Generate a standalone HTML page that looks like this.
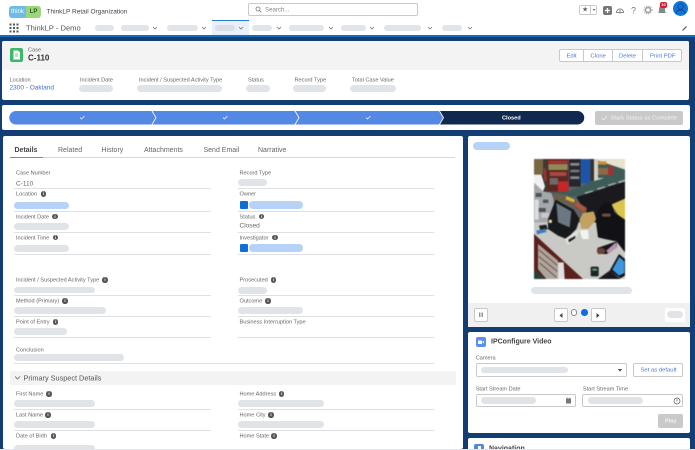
<!DOCTYPE html>
<html><head><meta charset="utf-8"><style>
html,body{margin:0;padding:0;width:695px;height:450px;overflow:hidden;background:#fff}
#r{position:relative;width:695px;height:450px;overflow:hidden;background:#123e73;font-family:"Liberation Sans",sans-serif;color:#555;filter:blur(.3px)}
#r div,#r svg{position:absolute}
.w{background:#fff;border-radius:2px}
.t{white-space:nowrap;line-height:8px;font-size:5.6px;color:#666;transform:translateY(.6px)}
.p{background:#e0e4e9;border-radius:4px}
.b{background:#b7d2f7;border-radius:4px}
.n{background:#e1e4e8;border-radius:3px;height:6px;top:25px}
.h{height:1px;background:#dde0e4}
.i{width:5.4px;height:5.4px;border-radius:50%;background:#555;color:#fff;font:bold 4.5px/5.4px "Liberation Sans",sans-serif;text-align:center}
.tab{white-space:nowrap;font-size:7px;line-height:10px;top:145.5px;color:#666}
.btn{border:1px solid #c9c9c9;border-radius:2px;background:#fff;box-sizing:border-box}
.av{width:8px;height:8px;background:#0f6fd6;border-radius:1px}
</style></head><body><div id="r">
<!-- header -->
<div style="left:0;top:0;width:695px;height:35px;background:#fff"></div>
<div style="left:0;top:35px;width:695px;height:1.5px;background:#0b6fc4"></div>
<div style="left:9px;top:6px;width:17px;height:11.5px;background:#6dbbea;border-radius:3px 0 0 3px;color:#fff;font-size:6px;line-height:13px;text-align:center">think</div>
<div style="left:26px;top:6px;width:15px;height:11.5px;background:#9ad67a;border-radius:0 3px 3px 0;color:#2d5a22;font-size:6px;font-weight:bold;line-height:13px;text-align:center">LP</div>
<div class="t" style="left:46.5px;top:8px;font-size:6.5px;color:#444">ThinkLP Retail Organization</div>
<div class="btn" style="left:248px;top:2.5px;width:170px;height:13.5px"></div>
<svg style="left:255px;top:6px" width="7" height="7" viewBox="0 0 7 7"><circle cx="3" cy="3" r="2" fill="none" stroke="#777" stroke-width=".8"/><path d="M4.5 4.5 6.3 6.3" stroke="#777" stroke-width=".8"/></svg>
<div class="t" style="left:265px;top:6px;color:#888;font-size:6.1px">Search...</div>
<svg style="left:9px;top:23px" width="10" height="10" viewBox="0 0 10 10" fill="#555"><rect x="0.5" y="0.5" width="2" height="2"/><rect x="4" y="0.5" width="2" height="2"/><rect x="7.5" y="0.5" width="2" height="2"/><rect x="0.5" y="4" width="2" height="2"/><rect x="4" y="4" width="2" height="2"/><rect x="7.5" y="4" width="2" height="2"/><rect x="0.5" y="7.5" width="2" height="2"/><rect x="4" y="7.5" width="2" height="2"/><rect x="7.5" y="7.5" width="2" height="2"/></svg>
<div class="t" style="left:26px;top:23.5px;font-size:7.6px;color:#555">ThinkLP - Demo</div>
<div style="left:212px;top:20px;width:37px;height:15px;background:#e9f0fa"></div>
<div style="left:212px;top:20px;width:37px;height:1px;background:#2f7ad1"></div>
<div class="n" style="left:95px;width:19px"></div>
<div class="n" style="left:121px;width:28px"></div>
<div class="n" style="left:167px;width:31px"></div>
<div class="n" style="left:215px;width:20px;background:#d9dfe7"></div>
<div class="n" style="left:252px;width:20px"></div>
<div class="n" style="left:289px;width:35px"></div>
<div class="n" style="left:341px;width:25px"></div>
<div class="n" style="left:384px;width:37px"></div>
<div class="n" style="left:442px;width:20px"></div>
<svg style="left:0;top:0" width="695" height="36" fill="none" stroke="#777" stroke-width=".8"><path d="M153 27l2 2 2-2M202 27l2 2 2-2M239 27l2 2 2-2M277 27l2 2 2-2M329 27l2 2 2-2M370 27l2 2 2-2M428 27l2 2 2-2M468 27l2 2 2-2"/><path d="M682.5 30.5l4-4" stroke="#555" stroke-width="1.2"/></svg>
<div class="btn" style="left:579px;top:5px;width:18px;height:10px"></div>
<div style="left:590px;top:5px;width:1px;height:10px;background:#c9c9c9"></div>
<div class="t" style="left:582px;top:6px;font-size:7px;color:#666">★</div>
<svg style="left:591px;top:8px" width="6" height="4"><path d="M1.5 1h3L3 3z" fill="#777"/></svg>
<div style="left:603px;top:5.5px;width:9px;height:9px;background:#777;border-radius:2px"></div>
<svg style="left:603px;top:5.5px" width="9" height="9"><path d="M4.5 2v5M2 4.5h5" stroke="#fff" stroke-width="1.3"/></svg>
<svg style="left:615px;top:5px" width="10" height="10" fill="none" stroke="#888" stroke-width="1"><path d="M1.5 7.5a3.5 3.5 0 0 1 7 0M1 7.5h8M5 5v3.5"/></svg>
<div class="t" style="left:631px;top:6px;font-size:9px;color:#777">?</div>
<svg style="left:643px;top:5px" width="10" height="10"><circle cx="5" cy="5" r="2.5" fill="none" stroke="#999" stroke-width="1.4"/><circle cx="5" cy="5" r="4" fill="none" stroke="#999" stroke-width=".9" stroke-dasharray="1.2 1.2"/></svg>
<svg style="left:656px;top:2px" width="13" height="13"><path d="M2 11c1-1 1-2 1-4s1-3 3-3 3 1 3 3 0 3 1 4z" fill="#888"/></svg>
<div style="left:660px;top:2px;width:7px;height:5.5px;background:#d21f2e;border-radius:2px;color:#fff;font:bold 4px/5.5px 'Liberation Sans',sans-serif;text-align:center">10</div>
<svg style="left:672.5px;top:.5px" width="15" height="15"><circle cx="7.5" cy="7.5" r="7.5" fill="#0f75dd"/><circle cx="7.5" cy="5.6" r="2.8" fill="none" stroke="#0b3f86" stroke-width=".8"/><path d="M3 12.5c.5-2.5 2.5-3.5 4.500-3.500s4 1 4.500 3.500" fill="none" stroke="#0b3f86" stroke-width=".8"/></svg>

<!-- case panel -->
<div class="w" style="left:1.5px;top:40.5px;width:687.5px;height:59px"></div>
<div style="left:1.5px;top:40.5px;width:687.5px;height:29px;background:#f3f3f3;border-radius:2px 2px 0 0"></div>
<div style="left:9.5px;top:47.5px;width:13.5px;height:14px;background:#3cba6a;border-radius:2px"></div>
<svg style="left:9.5px;top:47.5px" width="14" height="14"><path d="M3.5 2.5h4.500l2 2v7h-6.500z" fill="#fff"/><path d="M5 6h3M5 8h3" stroke="#3cba6a" stroke-width=".7"/></svg>
<div class="t" style="left:28px;top:46px">Case</div>
<div class="t" style="left:28px;top:53.5px;font-size:8px;font-weight:bold;color:#333">C-110</div>
<div class="btn" style="left:559px;top:48.5px;width:122.5px;height:13.5px"></div>
<div style="left:583px;top:48.5px;width:1px;height:13.5px;background:#c9c9c9"></div>
<div style="left:612px;top:48.5px;width:1px;height:13.5px;background:#c9c9c9"></div>
<div style="left:642px;top:48.5px;width:1px;height:13.5px;background:#c9c9c9"></div>
<div class="t" style="left:566.5px;top:51.5px;color:#4a78d6;font-size:5.9px">Edit</div>
<div class="t" style="left:590.5px;top:51.5px;color:#4a78d6;font-size:5.9px">Clone</div>
<div class="t" style="left:619px;top:51.5px;color:#4a78d6;font-size:5.9px">Delete</div>
<div class="t" style="left:650px;top:51.5px;color:#4a78d6;font-size:5.9px">Print PDF</div>
<div class="t" style="left:9.5px;top:76px">Location</div>
<div class="t" style="left:80px;top:76px">Incident Date</div>
<div class="t" style="left:139px;top:76px">Incident / Suspected Activity Type</div>
<div class="t" style="left:248px;top:76px">Status</div>
<div class="t" style="left:294.5px;top:76px">Record Type</div>
<div class="t" style="left:352px;top:76px">Total Case Value</div>
<div class="t" style="left:9.5px;top:84px;font-size:6.5px;color:#3f6fd0">2300 - Oakland</div>
<div class="p" style="left:79px;top:85px;width:34px;height:6.5px"></div>
<div class="p" style="left:136.5px;top:85px;width:85px;height:6.5px"></div>
<div class="p" style="left:246px;top:85px;width:24px;height:6.5px"></div>
<div class="p" style="left:292.5px;top:85px;width:33.5px;height:6.5px"></div>
<div class="p" style="left:350px;top:85px;width:45.5px;height:6.5px"></div>

<!-- path -->
<div class="w" style="left:1.5px;top:105px;width:688px;height:25px"></div>
<svg style="left:0;top:105px" width="695" height="25"><path d="M16 6H151.5l4 6.75-4 6.75H16a6.75 6.75 0 0 1 0-13.500z" fill="#5388e4"/><path d="M152.5 6H294.5l4 6.75-4 6.75H152.5l4-6.750z" fill="#5388e4"/><path d="M295.5 6H439l4 6.75-4 6.75H295.5l4-6.750z" fill="#5388e4"/><path d="M440 6H577.5a6.75 6.75 0 0 1 0 13.500H440l4-6.750z" fill="#12294f"/><path d="M80 12.5l1.500 1.500 3-3M223 12.5l1.500 1.500 3-3M366 12.5l1.500 1.500 3-3" fill="none" stroke="#fff" stroke-width=".7"/></svg>
<div class="t" style="left:502px;top:114px;color:#fff;font-weight:bold">Closed</div>
<div style="left:594.5px;top:111px;width:88.5px;height:13.5px;background:#c9c9c9;border-radius:2px"></div>
<div class="t" style="left:611px;top:114px;color:#f2f2f2;font-size:5.9px">Mark Status as Complete</div>
<svg style="left:600px;top:114px" width="8" height="8"><path d="M1.5 4l2 2 3.500-4" fill="none" stroke="#f2f2f2" stroke-width=".8"/></svg>

<!-- details -->
<div class="w" style="left:2.5px;top:135.5px;width:460px;height:313px"></div>
<div class="tab" style="left:14.5px;font-weight:bold;color:#444">Details</div>
<div class="tab" style="left:58px">Related</div>
<div class="tab" style="left:101.5px">History</div>
<div class="tab" style="left:144px">Attachments</div>
<div class="tab" style="left:203.5px">Send Email</div>
<div class="tab" style="left:258px">Narrative</div>
<div style="left:9.5px;top:157px;width:445.5px;height:1px;background:#d4d7dc"></div>
<div style="left:9.5px;top:156.5px;width:33px;height:1.5px;background:#5c8fe0"></div>

<div class="t" style="left:16px;top:169px">Case Number</div>
<div class="t" style="left:16px;top:179.5px;font-size:6.5px">C-110</div>
<div class="h" style="left:14px;top:188px;width:197px"></div>
<div class="t" style="left:16px;top:190px">Location</div><div class="i" style="left:40.8px;top:191.3px">i</div>
<div class="b" style="left:14px;top:202px;width:55px;height:7px"></div>
<div class="h" style="left:14px;top:210.5px;width:197px"></div>
<div class="t" style="left:16px;top:212.7px">Incident Date</div><div class="i" style="left:52.3px;top:214px">i</div>
<div class="p" style="left:14px;top:223px;width:55px;height:7px"></div>
<div class="h" style="left:14px;top:232px;width:197px"></div>
<div class="t" style="left:16px;top:233.5px">Incident Time</div><div class="i" style="left:52.8px;top:234.8px">i</div>
<div class="p" style="left:14px;top:244.5px;width:55px;height:7px"></div>
<div class="h" style="left:14px;top:253.5px;width:197px"></div>

<div class="t" style="left:239.5px;top:169px">Record Type</div>
<div class="p" style="left:238px;top:179px;width:28.7px;height:7px"></div>
<div class="h" style="left:238px;top:188px;width:196px"></div>
<div class="t" style="left:239.5px;top:190px">Owner</div>
<div class="av" style="left:239.5px;top:201px"></div>
<div class="b" style="left:249px;top:201px;width:54px;height:8px"></div>
<div class="h" style="left:238px;top:210.5px;width:196px"></div>
<div class="t" style="left:239.5px;top:212.7px">Status</div><div class="i" style="left:259px;top:214px">i</div>
<div class="t" style="left:239.5px;top:222px;font-size:6.5px">Closed</div>
<div class="h" style="left:238px;top:232px;width:196px"></div>
<div class="t" style="left:239.5px;top:233.5px">Investigator</div><div class="i" style="left:272.3px;top:234.8px">i</div>
<div class="av" style="left:239.5px;top:244px"></div>
<div class="b" style="left:249px;top:244px;width:54px;height:8px"></div>
<div class="h" style="left:238px;top:253.5px;width:196px"></div>

<div class="t" style="left:16px;top:276px">Incident / Suspected Activity Type</div><div class="i" style="left:102.3px;top:277.3px">i</div>
<div class="p" style="left:14px;top:286.5px;width:81px;height:6.5px"></div>
<div class="h" style="left:14px;top:295px;width:197px"></div>
<div class="t" style="left:16px;top:297px">Method (Primary)</div><div class="i" style="left:62.3px;top:298.3px">i</div>
<div class="p" style="left:14px;top:307px;width:92px;height:7px"></div>
<div class="h" style="left:14px;top:316px;width:197px"></div>
<div class="t" style="left:16px;top:318px">Point of Entry</div><div class="i" style="left:53px;top:319.3px">i</div>
<div class="p" style="left:14px;top:328px;width:53px;height:7px"></div>
<div class="h" style="left:14px;top:337px;width:197px"></div>
<div class="t" style="left:16px;top:345.5px">Conclusion</div>
<div class="p" style="left:14px;top:354px;width:110px;height:7px"></div>
<div class="h" style="left:14px;top:363px;width:420px"></div>

<div class="t" style="left:239.5px;top:276px">Prosecuted</div><div class="i" style="left:271px;top:277.3px">i</div>
<div class="p" style="left:238px;top:287px;width:28.7px;height:6.5px"></div>
<div class="h" style="left:238px;top:295px;width:196px"></div>
<div class="t" style="left:239.5px;top:297px">Outcome</div><div class="i" style="left:265.3px;top:298.3px">i</div>
<div class="p" style="left:238px;top:307px;width:65px;height:7px"></div>
<div class="h" style="left:238px;top:316px;width:196px"></div>
<div class="t" style="left:239.5px;top:318px">Business Interruption Type</div>
<div class="h" style="left:238px;top:337px;width:196px"></div>

<div style="left:10px;top:371px;width:445.5px;height:14px;background:#f3f3f3;border-radius:1px"></div>
<svg style="left:14px;top:375px" width="7" height="6"><path d="M1 1.5l2.500 2.500 2.500-2.500" fill="none" stroke="#666" stroke-width=".8"/></svg>
<div class="t" style="left:23.5px;top:374px;font-size:7.3px;color:#555">Primary Suspect Details</div>

<div class="t" style="left:16px;top:390px">First Name</div><div class="i" style="left:46.3px;top:391.3px">i</div>
<div class="p" style="left:14px;top:400px;width:81px;height:7px"></div>
<div class="h" style="left:14px;top:409px;width:197px"></div>
<div class="t" style="left:16px;top:411px">Last Name</div><div class="i" style="left:45.3px;top:412.3px">i</div>
<div class="p" style="left:14px;top:421px;width:81px;height:6.5px"></div>
<div class="h" style="left:14px;top:430px;width:197px"></div>
<div class="t" style="left:16px;top:432px">Date of Birth</div><div class="i" style="left:51px;top:433.3px">i</div>
<div class="p" style="left:14px;top:445px;width:81px;height:7px"></div>
<div class="t" style="left:239.5px;top:390px">Home Address</div><div class="i" style="left:279px;top:391.3px">i</div>
<div class="p" style="left:238px;top:400px;width:86px;height:7px"></div>
<div class="h" style="left:238px;top:409px;width:196px"></div>
<div class="t" style="left:239.5px;top:411px">Home City</div><div class="i" style="left:268.3px;top:412.3px">i</div>
<div class="p" style="left:238px;top:421px;width:86px;height:6.5px"></div>
<div class="h" style="left:238px;top:430px;width:196px"></div>
<div class="t" style="left:239.5px;top:432px">Home State</div><div class="i" style="left:271.3px;top:433.3px">i</div>

<!-- carousel -->
<div class="w" style="left:468px;top:135.5px;width:222px;height:191.5px"></div>
<div class="b" style="left:473px;top:142px;width:37px;height:8px"></div>
<svg style="left:533px;top:158px;filter:blur(.4px)" width="93" height="123" viewBox="0 0 279 369">
<defs><clipPath id="c"><rect x="3" y="3" width="273" height="360" rx="3"/></clipPath></defs>
<g clip-path="url(#c)">
<rect width="279" height="369" fill="#5f6265"/>
<rect x="3" y="3" width="40" height="100" fill="#3d3a36"/>
<rect x="3" y="3" width="27" height="47" fill="#7a6544"/>
<rect x="42" y="3" width="64" height="98" fill="#5c2623"/>
<rect x="46" y="8" width="58" height="8" fill="#b3332e"/>
<rect x="46" y="18" width="58" height="18" fill="#8f8a58"/>
<rect x="50" y="42" width="50" height="12" fill="#a74a40"/>
<rect x="50" y="60" width="25" height="20" fill="#6a6a68"/>
<rect x="75" y="70" width="31" height="31" fill="#c4262a"/>
<rect x="108" y="3" width="35" height="83" fill="#26262c"/>
<rect x="112" y="15" width="27" height="8" fill="#8b8b90"/>
<rect x="112" y="35" width="27" height="8" fill="#777"/>
<rect x="112" y="55" width="27" height="8" fill="#8b8b90"/>
<rect x="143" y="3" width="29" height="73" fill="#1f55a8"/>
<rect x="172" y="3" width="11" height="66" fill="#39302e"/>
<rect x="183" y="3" width="93" height="72" fill="#cfd2c8"/>
<path d="M195 3H276V35L195 8z" fill="#e8e3cf"/>
<path d="M195 8 276 35V60H195z" fill="#3d5c58"/>
<rect x="195" y="10" width="25" height="10" fill="#cf8a3c"/>
<rect x="195" y="30" width="30" height="20" fill="#8c6a4a"/>
<rect x="225" y="25" width="15" height="27" fill="#a1332e"/>
<path d="M45 103 105 100 180 70 240 52 276 35V68L130 116 70 112z" fill="#3d5c58"/>
<path d="M155 103l24-6 3 4-25 7zM192 91l23-6 3 4-24 7zM225 80l22-6 3 3-23 7zM255 71l20-6v3l-18 6z" fill="#a5afad"/>
<path d="M130 117 276 70V122L235 140 240 160 276 186V230H170L150 150z" fill="#1a1a1e"/>
<path d="M235 140 276 122V186L255 170z" fill="#dcc54f"/>
<path d="M3 50 25 50 36 85 30 100 3 75z" fill="#f0f0f2"/>
<path d="M32 30l6 2 3 34-6 4z" fill="#b3322c"/>
<path d="M3 75 30 100 55 105 62 125 62 195H3z" fill="#a5a8aa"/>
<path d="M8 105h18v12H8zM30 125h16v10H30zM12 150h26v12H12z" fill="#505255"/>
<path d="M5 125h12v60H5z" fill="#dcdde0"/>
<path d="M25 165h24v14H25z" fill="#c9cace"/>
<path d="M62 105 100 110 162 150 158 170 100 135 62 122z" fill="#6b5e4a"/>
<path d="M100 114 125 125 123 134 98 124z" fill="#d9b53a"/>
<path d="M128 130 158 150 155 162 126 142z" fill="#b8523a"/>
<path d="M3 193H190L276 240V363H150L3 228z" fill="#c9c9c6"/>
<path d="M3 228 150 363H3z" fill="#5a211c"/>
<path d="M15 258 75 308V363H40L15 333z" fill="#aca79d"/>
<path d="M17 275 73 322M17 295 73 340M20 315 70 358" stroke="#7a4a44" stroke-width="3"/>
<path d="M75 313 92 313 95 363H75z" fill="#dfe0e2"/>
<path d="M3 333 35 363H3z" fill="#27403c"/>
<path d="M45 183 68 125 122 155 140 183 130 213 100 243 75 233 45 213z" fill="#17191c"/>
<path d="M70 135 115 160 110 208 75 193z" fill="#6b7782"/>
<path d="M95 243 140 213 130 238 105 261z" fill="#e0e0dd"/>
<path d="M106 245l22-12-2 8-18 12z" fill="#1e1f22"/>
<path d="M140 218 165 215 168 243 148 243z" fill="#f3f3f0"/>
<path d="M140 185 150 165 182 160 190 185 165 213 145 211z" fill="#c3a15e"/>
<path d="M18 203l22-3 4 14-22 4z" fill="#1c1e22"/>
<path d="M10 218l28-6 2 10-28 7z" fill="#3a7fc2"/>
<circle cx="52" cy="190" r="5" fill="#e8dfa8"/>
<path d="M218 131 236 138 245 165 276 185V283L250 250 215 243 195 238 188 185 198 150z" fill="#121216"/>
<rect x="207" y="167" width="26" height="9" rx="3" fill="#6f5040"/>
<path d="M193 270 250 250 252 268 222 288 195 288z" fill="#15151a"/>
<path d="M220 278 248 253 252 268 226 288z" fill="#b893ab"/>
<ellipse cx="204" cy="279" rx="13" ry="9" fill="#6d4337"/>
<path d="M195 363 230 338 262 363z" fill="#17181e"/>
<path d="M230 338 258 288 276 303V353L262 361z" fill="#121318"/>
<path d="M238 335 259 297 274 310V345L258 353z" fill="#3f96dc"/>
<rect x="173" y="326" width="24" height="29" rx="4" fill="#182723"/>
<rect x="178" y="332" width="14" height="6" fill="#6e9a8a"/>
</g></svg>
<div class="p" style="left:530.7px;top:287px;width:101.3px;height:6.5px"></div>
<div style="left:468px;top:303px;width:222px;height:24px;background:#f0f0f0"></div>
<div class="btn" style="left:473.5px;top:307.5px;width:14.5px;height:14px"></div>
<svg style="left:477px;top:311px" width="8" height="8"><path d="M2.8 1.5v4.500M5.2 1.5v4.500" stroke="#666" stroke-width="1"/></svg>
<div class="btn" style="left:553.5px;top:307.5px;width:14.5px;height:14px"></div>
<svg style="left:553.5px;top:307.5px" width="14" height="14"><path d="M8.5 5v5L5.5 7.5z" fill="#444"/></svg>
<div style="left:570.7px;top:309.2px;width:6.6px;height:6.6px;border-radius:50%;background:#fff;border:.6px solid #888;box-sizing:border-box"></div>
<div style="left:581.2px;top:309.2px;width:6.6px;height:6.6px;border-radius:50%;background:#0f6fd6"></div>
<div class="btn" style="left:591px;top:307.5px;width:14.5px;height:14px"></div>
<svg style="left:591px;top:307.5px" width="14" height="14"><path d="M5.5 5v5L8.5 7.5z" fill="#444"/></svg>
<div style="left:665px;top:307.5px;width:20px;height:14px;background:#fff;border-radius:2px"></div>
<div class="p" style="left:667px;top:311px;width:16px;height:7px"></div>

<!-- video -->
<div class="w" style="left:468px;top:332px;width:222px;height:101px"></div>
<div style="left:475.5px;top:337px;width:10px;height:10px;background:#5b8ff0;border-radius:2px"></div>
<svg style="left:475.5px;top:337px" width="10" height="10"><path d="M2 3.5h4v3.500H2zM6.5 4.8 8 3.8v2.600L6.5 5.500z" fill="#fff"/></svg>
<div class="t" style="left:491px;top:337.7px;font-size:7px;font-weight:bold;color:#444">IPConfigure Video</div>
<div class="t" style="left:475.7px;top:354px">Camera</div>
<div class="btn" style="left:475.5px;top:363px;width:151.5px;height:13.7px"></div>
<div class="p" style="left:480.7px;top:366.5px;width:87.3px;height:6.8px"></div>
<svg style="left:617px;top:367.5px" width="6" height="5"><path d="M.8 1h4.400L3 3.800z" fill="#555"/></svg>
<div class="btn" style="left:633px;top:363px;width:50px;height:13.7px"></div>
<div class="t" style="left:640.5px;top:366px;color:#4a78d6;font-size:5.9px">Set as default</div>
<div class="t" style="left:475.7px;top:384.5px">Start Stream Date</div>
<div class="btn" style="left:475.5px;top:393.5px;width:100.5px;height:13.7px"></div>
<div class="p" style="left:480.7px;top:397px;width:55.3px;height:6.8px"></div>
<svg style="left:565px;top:397px" width="7" height="7"><rect x="1" y="1.5" width="5" height="5" fill="#777"/><path d="M2.2 .5v1.500M4.8 .5v1.500" stroke="#777" stroke-width=".7"/></svg>
<div class="t" style="left:583px;top:384.5px">Start Stream Time</div>
<div class="btn" style="left:582px;top:393.5px;width:101px;height:13.7px"></div>
<div class="p" style="left:588px;top:397px;width:55.3px;height:6.8px"></div>
<svg style="left:673px;top:396.5px" width="8" height="8"><circle cx="4" cy="4" r="3" fill="none" stroke="#555" stroke-width=".7"/><path d="M4 2.2V4.500" stroke="#555" stroke-width=".7"/></svg>
<div style="left:658px;top:414px;width:25px;height:13.5px;background:#c9c9c9;border-radius:2px"></div>
<div class="t" style="left:665px;top:417px;color:#f2f2f2;font-weight:bold">Play</div>

<!-- navigation -->
<div class="w" style="left:468px;top:438px;width:222px;height:12px"></div>
<div style="left:474px;top:444px;width:10px;height:10px;background:#4f86ec;border-radius:2px"></div>
<div style="left:477.5px;top:445.5px;width:3px;height:3px;background:#fff"></div>
<div class="t" style="left:489px;top:444.5px;font-size:7px;font-weight:bold;color:#444">Navigation</div>
<div style="left:0;top:449px;width:695px;height:1px;background:#e4e6e9"></div>
</div></body></html>
